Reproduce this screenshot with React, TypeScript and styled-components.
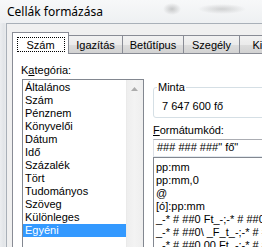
import React from "react";
import styled, { createGlobalStyle, css } from "styled-components";

const GlobalStyle = createGlobalStyle`
  html, body { margin: 0; padding: 0; background: #f0f0f0; overflow: hidden; }
  body { font-family: "Liberation Sans", Arial, sans-serif; font-size: 11px; color: #000; }
  * { box-sizing: border-box; }
`;

const Window = styled.div`
  width: 262px;
  height: 247px;
  overflow: hidden;
  display: grid;
  grid-template-columns: 6px 1fr;
  grid-template-rows: 23px 1fr;
`;

const TitleBar = styled.div`
  grid-column: 1 / 3;
  display: flex;
  align-items: center;
  padding: 0 0 1px 7px;
  font-family: "Noto Sans", "Liberation Sans", sans-serif;
  font-size: 12px;
  color: #000;
  background:
    radial-gradient(ellipse 9px 6px at 172px 9px, rgba(80, 80, 80, 0.28), transparent),
    radial-gradient(ellipse 24px 5px at 222px 9px, rgba(80, 80, 80, 0.22), transparent),
    linear-gradient(#f7f8f9, #eef0f2);
`;

const Frame = styled.div`
  background: linear-gradient(to right, #eceef0, #e2e5e8 60%, #e9ebed);
`;

const Client = styled.div`
  min-width: 0;
  overflow: hidden;
  background: #f0f0f0;
  border-top: 1px solid #a9b0b8;
  border-left: 1px solid #a9b0b8;
  padding: 8px 0 0 5px;
  display: flex;
  flex-direction: column;
`;

const TabStrip = styled.div`
  display: flex;
  align-items: flex-end;
  height: 21px;
  flex-shrink: 0;
`;

const Tab = styled.div<{ $active?: boolean; $w: number }>`
  flex: 0 0 auto;
  width: ${(p) => p.$w}px;
  display: flex;
  justify-content: center;
  border: 1px solid #898c95;
  border-bottom: none;
  white-space: nowrap;
  ${(p) =>
    p.$active
      ? css`
          height: 22px;
          margin-bottom: -1px;
          position: relative;
          z-index: 1;
          background: #fff;
          align-items: flex-start;
          padding-top: 4px;
        `
      : css`
          height: 18px;
          border-left: none;
          align-items: center;
          background: linear-gradient(#f2f2f2 0%, #ebebeb 50%, #dddddd 50%, #d2d2d2 100%);
        `}
`;

const Focus = styled.span`
  width: 48px;
  height: 15px;
  border: 1px dotted #000;
  display: flex;
  align-items: center;
  justify-content: center;
`;

const Page = styled.div`
  flex: 1;
  width: 330px;
  background: #fff;
  border-top: 1px solid #898c95;
  border-left: 1px solid #898c95;
  padding-left: 9px;
  display: grid;
  grid-template-columns: 122px 1fr;
  column-gap: 9px;
  align-items: start;
`;

const LeftCol = styled.div`
  padding-top: 10px;
  display: flex;
  flex-direction: column;
`;

const FieldLabel = styled.div<{ $shift?: number }>`
  line-height: 13px;
  margin-left: ${(p) => p.$shift ?? 0}px;
  white-space: nowrap;
`;

const ListBox = styled.div`
  margin-top: 2px;
  height: 200px;
  border: 1px solid #828790;
  display: flex;
`;

const Items = styled.div`
  flex: 1;
  padding-top: 1px;
  min-width: 0;
`;

const Item = styled.div<{ $selected?: boolean }>`
  height: 13px;
  line-height: 13px;
  padding-left: 2px;
  white-space: nowrap;
  overflow: hidden;
  ${(p) =>
    p.$selected &&
    css`
      background: #3399ff;
      color: #fff;
    `}
`;

const ScrollBar = styled.div`
  width: 17px;
  flex-shrink: 0;
  background: linear-gradient(to right, #e6e6e6 0px, #eeeeee 1px, #f3f3f3 50%, #eeeeee 100%);
`;

const ScrollButton = styled.div`
  height: 17px;
  display: flex;
  align-items: center;
  justify-content: center;
`;

const RightCol = styled.div`
  min-width: 0;
  display: flex;
  flex-direction: column;
`;

const Group = styled.fieldset`
  margin: 27px 0 0 0;
  padding: 6px 8px 4px 3px;
  border: 1px solid #d5dfe5;
  border-radius: 3px;
  min-width: 0;
`;

const Legend = styled.legend`
  padding: 0 1px;
  line-height: 13px;
`;

const SampleValue = styled.div`
  line-height: 13px;
  padding-left: 5px;
  white-space: nowrap;
`;

const CodeInput = styled.div`
  margin-top: 2px;
  height: 18px;
  width: 200px;
  padding: 1px 3px 0;
  line-height: 13px;
  white-space: nowrap;
  border: 1px solid #dbdfe6;
  border-top-color: #abadb3;
  border-bottom-color: #e3e9ef;
`;

const CodeList = styled.div`
  height: 120px;
  width: 200px;
  border: 1px solid #828790;
  padding-top: 3px;
`;

const categories = [
  "Általános",
  "Szám",
  "Pénznem",
  "Könyvelői",
  "Dátum",
  "Idő",
  "Százalék",
  "Tört",
  "Tudományos",
  "Szöveg",
  "Különleges",
  "Egyéni",
];

const codes = [
  "pp:mm",
  "pp:mm,0",
  "@",
  "[ó]:pp:mm",
  '_-* # ##0 Ft_-;-* # ##0 Ft_-;_-* "-" Ft_-;_-@_-',
  '_-* # ##0\\ _F_t_-;-* # ##0\\ _F_t_-;_-* "-"\\ _F_t_-;_-@_-',
  '_-* # ##0,00 Ft_-;-* # ##0,00 Ft_-;_-* "-"?? Ft_-;_-@_-',
  '_-* # ##0,00\\ _F_t_-;-* # ##0,00\\ _F_t_-;_-* "-"??\\ _F_t_-;_-@_-',
];

const tabs: { label: string; w: number }[] = [
  { label: "Igazítás", w: 54 },
  { label: "Betűtípus", w: 61 },
  { label: "Szegély", w: 56 },
  { label: "Kitöltés", w: 62 },
];

export default function App() {
  return (
    <>
      <GlobalStyle />
      <Window>
        <TitleBar>Cellák formázása</TitleBar>
        <Frame />
        <Client>
          <TabStrip>
            <Tab $active $w={57}>
              <Focus>Szám</Focus>
            </Tab>
            {tabs.map((t) => (
              <Tab key={t.label} $w={t.w}>
                {t.label}
              </Tab>
            ))}
          </TabStrip>
          <Page>
            <LeftCol>
              <FieldLabel $shift={-1}>
                K<u>a</u>tegória:
              </FieldLabel>
              <ListBox>
                <Items>
                  {categories.map((c) => (
                    <Item key={c} $selected={c === "Egyéni"}>
                      {c}
                    </Item>
                  ))}
                </Items>
                <ScrollBar>
                  <ScrollButton>
                    <svg width="7" height="4" viewBox="0 0 7 4">
                      <polygon points="0,4 3.5,0 7,4" fill="#acacac" />
                    </svg>
                  </ScrollButton>
                </ScrollBar>
              </ListBox>
            </LeftCol>
            <RightCol>
              <Group>
                <Legend>Minta</Legend>
                <SampleValue>7 647 600 fő</SampleValue>
              </Group>
              <FieldLabel style={{ marginTop: 6 }}>
                <u>F</u>ormátumkód:
              </FieldLabel>
              <CodeInput>### ### ###" fő"</CodeInput>
              <CodeList>
                {codes.map((c) => (
                  <Item key={c}>{c}</Item>
                ))}
              </CodeList>
            </RightCol>
          </Page>
        </Client>
      </Window>
    </>
  );
}
